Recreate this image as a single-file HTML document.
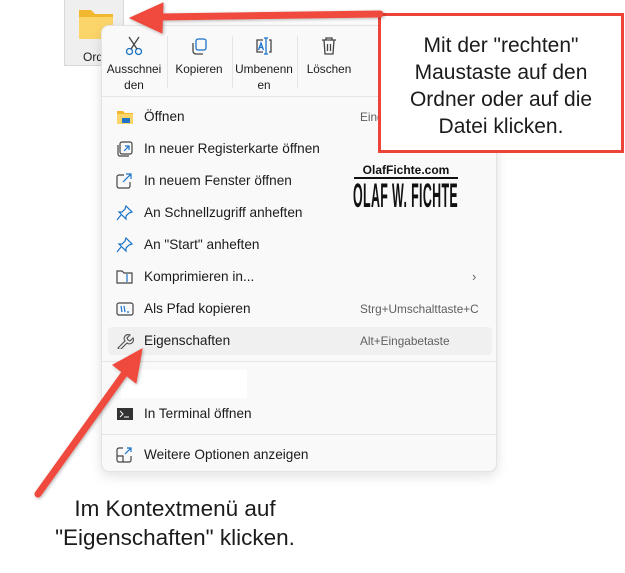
<!DOCTYPE html>
<html><head><meta charset="utf-8"><style>
*{margin:0;padding:0;box-sizing:border-box}
body{width:625px;height:573px;background:#fff;position:relative;overflow:hidden;font-family:"Liberation Sans",sans-serif;color:#1b1b1b}
.abs{position:absolute}
.menu{left:101px;top:25px;width:396px;height:447px;background:#f9f9f9;border:1px solid #e3e3e3;border-radius:8px;box-shadow:0 4px 12px rgba(0,0,0,.12)}
.row{position:absolute;left:0;height:28px;font-size:13.6px;line-height:28px}
.row .t{position:absolute;left:42px;white-space:nowrap}
.row .k{position:absolute;left:258px;font-size:11.8px;color:#5f5f5f;white-space:nowrap}
.row svg{position:absolute;left:14px;top:6px}
.tb{position:absolute;top:0;width:64px;text-align:center;font-size:11.8px;line-height:16px}
.tb svg{display:block;margin:10px auto 5px}
.vs{position:absolute;top:10px;width:1px;height:52px;background:#e5e5e5}
.hs{position:absolute;left:0;width:394px;height:1px;background:#e5e5e5}
.cap{font-size:21px;text-align:center;color:#1b1b1b;line-height:27px}
</style></head><body>
<div class="abs" style="left:64px;top:-2px;width:60px;height:68px;background:#efefef;border:1px solid #d8d8d8"></div>
<svg class="abs" style="left:78px;top:6px" width="36" height="34" viewBox="0 0 36 34"><path d="M1 4h12l4 4h18v24H1z" fill="#f1b72e"/><rect x="1" y="11" width="34" height="22" rx="1" fill="#fcd56a"/></svg>
<div class="abs" style="left:83px;top:50px;font-size:12px">Ord</div>

<div class="abs menu">
 <div class="tb" style="left:0"><svg width="18" height="20" viewBox="0 0 18 20" fill="none" stroke="#1a73c9" stroke-width="1.3"><circle cx="4.5" cy="15.5" r="3"/><circle cx="13.5" cy="15.5" r="3"/><path d="M6 13L14 1M12 13L4 1" stroke="#444"/></svg>Ausschnei<br>den</div>
 <div class="vs" style="left:65px"></div>
 <div class="tb" style="left:65px"><svg width="18" height="20" viewBox="0 0 18 20" fill="none" stroke-width="1.3"><rect x="6" y="3" width="10" height="11" rx="2" stroke="#1a73c9"/><path d="M3 7v8a3 3 0 003 3h7" stroke="#444"/></svg>Kopieren</div>
 <div class="vs" style="left:130px"></div>
 <div class="tb" style="left:130px"><svg width="20" height="20" viewBox="0 0 20 20" fill="none" stroke-width="1.3"><path d="M9 4H3v12h6M15 4h2v12h-2" stroke="#444"/><path d="M12 2v16M10 2h4M10 18h4" stroke="#1a73c9"/><path d="M4.5 14l2.5-7 2.5 7M5.5 11.5h3" stroke="#1a73c9"/></svg>Umbenenn<br>en</div>
 <div class="vs" style="left:195px"></div>
 <div class="tb" style="left:195px"><svg width="18" height="20" viewBox="0 0 18 20" fill="none" stroke="#444" stroke-width="1.3"><path d="M2 4h14M6 4V2h6v2M4 4l1 14h8l1-14M7.5 8v7M10.5 8v7"/></svg>Löschen</div>
 <div class="hs" style="top:70px"></div>

 <div class="row" style="top:77px"><svg width="18" height="16"><path d="M1 2h6l2 2h8v11H1z" fill="#f1b72e"/><rect x="1" y="5" width="16" height="10" fill="#fcd56a"/><rect x="6" y="9" width="8" height="5" fill="#1e73c8"/></svg><span class="t">Öffnen</span><span class="k">Eingabetaste</span></div>
 <div class="row" style="top:109px"><svg width="18" height="16" fill="none" stroke="#444" stroke-width="1.2"><rect x="4" y="1" width="12" height="12" rx="2"/><path d="M2 4v9a2 2 0 002 2h9"/><path d="M8 10l5-5M9 5h4v4" stroke="#1a73c9"/></svg><span class="t">In neuer Registerkarte öffnen</span></div>
 <div class="row" style="top:141px"><svg width="18" height="16" fill="none" stroke="#444" stroke-width="1.2"><path d="M8 2H3a2 2 0 00-2 2v9a2 2 0 002 2h9a2 2 0 002-2V9"/><path d="M7 9l8-8M10 1h5v5" stroke="#1a73c9"/></svg><span class="t">In neuem Fenster öffnen</span></div>
 <div class="row" style="top:173px"><svg width="18" height="16" fill="none" stroke="#1a73c9" stroke-width="1.2"><path d="M10 1l6 6-3 1-3 3v3l-7-7h3l3-3zM5 10l-4 5"/></svg><span class="t">An Schnellzugriff anheften</span></div>
 <div class="row" style="top:205px"><svg width="18" height="16" fill="none" stroke="#1a73c9" stroke-width="1.2"><path d="M10 1l6 6-3 1-3 3v3l-7-7h3l3-3zM5 10l-4 5"/></svg><span class="t">An "Start" anheften</span></div>
 <div class="row" style="top:237px"><svg width="18" height="16" fill="none" stroke="#444" stroke-width="1.2"><path d="M1 2h5l2 2h8v10H1z"/><path d="M11 5v8" stroke="#1a73c9"/></svg><span class="t">Komprimieren in...</span><span style="position:absolute;left:370px;color:#666;font-size:13px">›</span></div>
 <div class="row" style="top:269px"><svg width="18" height="16" fill="none" stroke="#444" stroke-width="1.2"><rect x="1" y="2" width="16" height="12" rx="2"/><path d="M5 5l1 6M8 5l1 6M11 11h2" stroke="#1a73c9"/></svg><span class="t">Als Pfad kopieren</span><span class="k">Strg+Umschalttaste+C</span></div>
 <div class="row" style="top:301px;left:6px;width:384px;background:#f0f0f0;border-radius:4px"></div>
 <div class="row" style="top:301px"><svg width="18" height="16" fill="none" stroke="#555" stroke-width="1.2"><path d="M2 15l7-7a4 4 0 015-6l-3 3 1 2 2 1 3-3a4 4 0 01-6 5l-7 7z"/></svg><span class="t">Eigenschaften</span><span class="k">Alt+Eingabetaste</span></div>
 <div class="hs" style="top:335px"></div>
 <div style="position:absolute;left:19px;top:344px;width:126px;height:28px;background:#fff"></div>
 <div class="row" style="top:374px"><svg width="18" height="16"><rect x="1" y="2" width="16" height="12" fill="#333"/><path d="M4 5l3 3-3 3" stroke="#fff" fill="none"/><path d="M8 11h5" stroke="#fff"/></svg><span class="t">In Terminal öffnen</span></div>
 <div class="hs" style="top:408px"></div>
 <div class="row" style="top:415px"><svg width="18" height="16" fill="none" stroke="#444" stroke-width="1.2"><path d="M7 1H3a2 2 0 00-2 2v10a2 2 0 002 2h10a2 2 0 002-2V9M1 9h6v6"/><path d="M9 7l6-6M11 1h4v4" stroke="#1a73c9"/></svg><span class="t">Weitere Optionen anzeigen</span></div>
</div>

<div class="abs" style="left:354px;top:164px;width:104px;text-align:center;font-weight:bold;font-size:12px;line-height:13px;color:#111;border-bottom:2px solid #111">OlafFichte.com</div>
<div class="abs" style="left:353px;top:181px;width:110px;height:30px;overflow:hidden"><div style="font-weight:bold;font-size:34px;line-height:30px;letter-spacing:1px;transform:scaleX(.365);transform-origin:0 0;white-space:nowrap;color:#111">OLAF W. FICHTE</div></div>

<div class="abs" style="left:378px;top:13px;width:246px;height:140px;border:3px solid #ee4338;background:#fff"></div>
<div class="abs cap" style="left:381px;top:32px;width:240px">Mit der "rechten"<br>Maustaste auf den<br>Ordner oder auf die<br>Datei klicken.</div>
<div class="abs cap" style="left:15px;top:494px;width:320px;line-height:29px;font-size:22.5px">Im Kontextmenü auf<br>"Eigenschaften" klicken.</div>

<svg class="abs" style="left:0;top:0" width="625" height="573">
<defs><filter id="s"><feDropShadow dx="1" dy="1" stdDeviation="1.5" flood-opacity=".3"/></filter></defs>
<g fill="#f04a3c" stroke="#f04a3c" filter="url(#s)">
<path d="M380 14L158 17" stroke-width="7" stroke-linecap="round"/>
<path d="M130 18L163 3L162 33Z"/>
<path d="M38 494L127 370" stroke-width="7" stroke-linecap="round"/>
<path d="M142 349L113 365L136 383Z"/>
</g></svg>
</body></html>
